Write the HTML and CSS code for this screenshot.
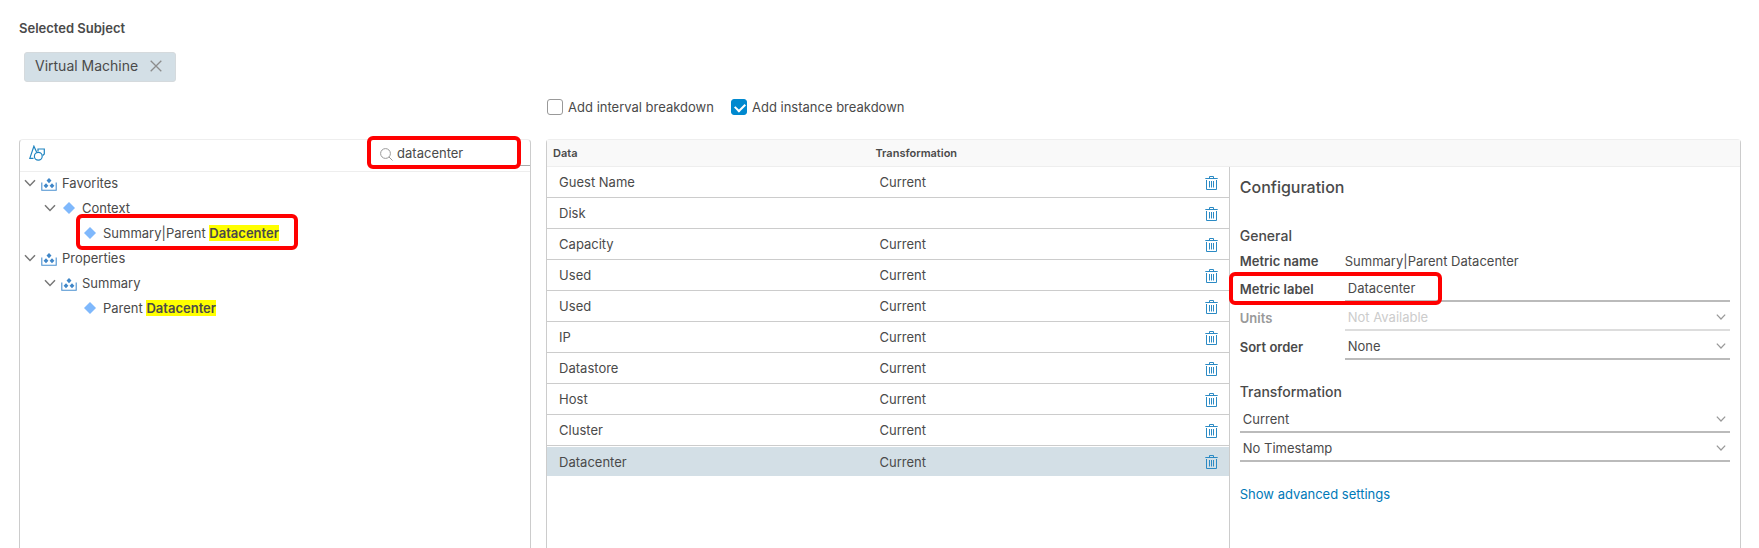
FILE: index.html
```html
<!DOCTYPE html>
<html lang="en">
<head>
<meta charset="utf-8">
<title>View data</title>
<link rel="stylesheet" href="styles.css">
</head>
<body>
<svg class="sprite" aria-hidden="true">
  <symbol id="caret" viewBox="0 0 12 8"><path d="M1 1.2 6 6.4 11 1.2" fill="none" stroke="currentColor" stroke-width="1.5"/></symbol>
  <symbol id="diamond" viewBox="0 0 12 12"><path d="M6 0 12 6 6 12 0 6Z" fill="#7fb8fc"/></symbol>
  <symbol id="group" viewBox="0 0 16 13">
    <path d="M.8 4.5V12.2H15.2V4.5" fill="none" stroke="#4a90d0" stroke-width="1.1"/>
    <path d="M8 0 10.5 2.6 8 5.2 5.500 2.600ZM5 5.300 7.400 7.800 5 10.300 2.600 7.800ZM11 5.300 13.400 7.800 11 10.300 8.600 7.800Z" fill="#3f86c8"/>
  </symbol>
  <symbol id="trash" viewBox="0 0 13 15">
    <path d="M.3 3.500H12.700M4.500 3V1.500H8.500V3M1.500 5V14.500H11.500V5M4.500 6V12.500M6.500 6V12.500M8.500 6V12.500" fill="none" stroke="#2b8ac4" stroke-width="1"/>
  </symbol>
</svg>

<header class="subject">
  <h1 class="subject-title">Selected Subject</h1>
  <div class="chip">Virtual Machine
    <button class="chip-close" type="button" aria-label="Remove Virtual Machine"><svg viewBox="0 0 12 12"><path d="M.7.700 11.300 11.300M11.300.700.700 11.300" fill="none" stroke="#8c8c8c" stroke-width="1.300"/></svg></button>
  </div>
</header>

<main class="workspace">
  <div class="options">
    <label class="option"><input class="check" type="checkbox">Add interval breakdown</label>
    <label class="option"><input class="check" type="checkbox" checked>Add instance breakdown</label>
  </div>

  <section class="panel tree-panel">
    <div class="tree-bar">
      <button class="shapes" type="button" aria-label="Object types"><svg viewBox="0 0 16 16"><path d="M4.500 13.400H.8L4.900 1.200 7.600 7M9 6.500V4H15.300V9L13.700 10.500" fill="none" stroke="#1f84c0" stroke-width="1.200"/><circle cx="9.300" cy="11.200" r="3.900" fill="none" stroke="#1f84c0" stroke-width="1.200"/></svg></button>
      <label class="search marked">
        <svg class="search-icon" viewBox="0 0 13 13"><circle cx="5.500" cy="5.500" r="4.900" fill="none" stroke="#999" stroke-width="1"/><path d="M9 9 12.500 12.500" stroke="#999" stroke-width="1"/></svg>
        <input class="search-input" type="text" value="datacenter" aria-label="Search">
        <span class="mark"></span>
      </label>
    </div>
    <ul class="tree">
      <li><div class="node"><svg class="caret"><use href="#caret"/></svg><svg class="group"><use href="#group"/></svg>Favorites</div>
        <ul class="branch">
          <li><div class="node"><svg class="caret"><use href="#caret"/></svg><svg class="diamond"><use href="#diamond"/></svg>Context</div>
            <ul class="branch">
              <li><div class="node leaf marked"><svg class="diamond"><use href="#diamond"/></svg><span>Summary|Parent <mark>Datacenter</mark></span><span class="mark"></span></div></li>
            </ul>
          </li>
        </ul>
      </li>
      <li><div class="node"><svg class="caret"><use href="#caret"/></svg><svg class="group"><use href="#group"/></svg>Properties</div>
        <ul class="branch">
          <li><div class="node"><svg class="caret"><use href="#caret"/></svg><svg class="group"><use href="#group"/></svg>Summary</div>
            <ul class="branch">
              <li><div class="node leaf"><svg class="diamond"><use href="#diamond"/></svg><span>Parent <mark>Datacenter</mark></span></div></li>
            </ul>
          </li>
        </ul>
      </li>
    </ul>
  </section>

  <section class="panel data-panel">
    <div class="table-wrap">
      <table class="data">
        <thead><tr><th class="col-data">Data</th><th>Transformation</th><th class="col-action"></th></tr></thead>
        <tbody>
          <tr><td>Guest Name</td><td>Current</td><td><button class="delete" type="button" aria-label="Delete Guest Name"><svg><use href="#trash"/></svg></button></td></tr>
          <tr><td>Disk</td><td></td><td><button class="delete" type="button" aria-label="Delete Disk"><svg><use href="#trash"/></svg></button></td></tr>
          <tr><td>Capacity</td><td>Current</td><td><button class="delete" type="button" aria-label="Delete Capacity"><svg><use href="#trash"/></svg></button></td></tr>
          <tr><td>Used</td><td>Current</td><td><button class="delete" type="button" aria-label="Delete Used"><svg><use href="#trash"/></svg></button></td></tr>
          <tr><td>Used</td><td>Current</td><td><button class="delete" type="button" aria-label="Delete Used"><svg><use href="#trash"/></svg></button></td></tr>
          <tr><td>IP</td><td>Current</td><td><button class="delete" type="button" aria-label="Delete IP"><svg><use href="#trash"/></svg></button></td></tr>
          <tr><td>Datastore</td><td>Current</td><td><button class="delete" type="button" aria-label="Delete Datastore"><svg><use href="#trash"/></svg></button></td></tr>
          <tr><td>Host</td><td>Current</td><td><button class="delete" type="button" aria-label="Delete Host"><svg><use href="#trash"/></svg></button></td></tr>
          <tr><td>Cluster</td><td>Current</td><td><button class="delete" type="button" aria-label="Delete Cluster"><svg><use href="#trash"/></svg></button></td></tr>
          <tr class="selected"><td>Datacenter</td><td>Current</td><td><button class="delete" type="button" aria-label="Delete Datacenter"><svg><use href="#trash"/></svg></button></td></tr>
        </tbody>
      </table>
    </div>
    <aside class="config">
      <div class="config-bar"></div>
      <form class="config-body">
        <h2 class="config-title">Configuration</h2>
        <h3 class="config-group">General</h3>
        <div class="row row-text"><span class="row-label">Metric name</span><span>Summary|Parent Datacenter</span></div>
        <div class="row marked"><label class="row-label" for="metric-label">Metric label</label><input class="field" id="metric-label" type="text" value="Datacenter"><span class="mark"></span></div>
        <div class="row row-disabled"><label class="row-label" for="units">Units</label><div class="select"><select class="field" id="units" disabled><option>Not Available</option></select><svg><use href="#caret"/></svg></div></div>
        <div class="row"><label class="row-label" for="sort">Sort order</label><div class="select"><select class="field" id="sort"><option>None</option></select><svg><use href="#caret"/></svg></div></div>
        <h3 class="config-group">Transformation</h3>
        <div class="select"><select class="field" aria-label="Transformation"><option>Current</option></select><svg><use href="#caret"/></svg></div>
        <div class="select"><select class="field" aria-label="Timestamp"><option>No Timestamp</option></select><svg><use href="#caret"/></svg></div>
        <a class="advanced" href="#">Show advanced settings</a>
      </form>
    </aside>
  </section>
</main>
</body>
</html>
```

FILE: styles.css
```css
* {
  box-sizing: border-box;
}

body {
  margin: 0;
  min-height: 100vh;
  display: flex;
  flex-direction: column;
  padding: 18px 18px 0 19px;
  background: #fff;
  color: #4a4a4a;
  font: 13px/20px Inter, "Open Sans", sans-serif;
}

h1, h2, h3, ul {
  margin: 0;
  padding: 0;
}

ul {
  list-style: none;
}

button {
  display: flex;
  padding: 0;
  border: 0;
  background: none;
}

svg {
  display: block;
  flex: none;
}

input, select {
  font: inherit;
  color: inherit;
}

.sprite {
  position: absolute;
  width: 0;
  height: 0;
}

.subject {
  display: flex;
  flex-direction: column;
  align-items: flex-start;
  gap: 14px;
}

.subject-title {
  font-size: 13px;
  line-height: 20px;
  font-weight: 600;
}

.chip {
  display: flex;
  align-items: center;
  gap: 12px;
  height: 30px;
  margin-left: 5px;
  padding: 0 13px 2px 10px;
  border: 1px solid #d5dadd;
  border-radius: 3px;
  background: #d3dfe6;
  font-size: 14px;
}

.chip-close svg {
  width: 12px;
  height: 12px;
}

.workspace {
  flex: 1;
  display: grid;
  grid-template: auto 1fr / 3fr 7fr;
  column-gap: 15px;
  margin-top: 15px;
}

.options {
  grid-column: 2;
  display: flex;
  gap: 16px;
  height: 42px;
}

.option {
  display: flex;
  align-items: flex-start;
  gap: 5px;
  height: 20px;
}

.check {
  appearance: none;
  width: 16px;
  height: 16px;
  margin: 2px 0 0 1px;
  border: 1px solid #999;
  border-radius: 3px;
}

.check:checked {
  border-color: #0089cf;
  background: #0089cf;
}

.check:checked::before {
  content: "";
  display: block;
  width: 8px;
  height: 5px;
  margin: 3px;
  border: solid #fff;
  border-width: 0 0 2px 2px;
  transform: rotate(-45deg);
}

.panel {
  border: 1px solid #ccc;
  border-top-color: #eee;
  border-bottom: 0;
  border-radius: 4px 4px 0 0;
}

.tree-bar {
  display: flex;
  justify-content: space-between;
  height: 32px;
  padding-left: 9px;
  border-bottom: 1px solid #eee;
}

.shapes {
  margin-top: 5px;
}

.shapes svg {
  width: 16px;
  height: 16px;
}

.marked {
  position: relative;
}

.mark {
  position: absolute;
  border: 4px solid #f00;
  border-radius: 6px;
  pointer-events: none;
}

.search {
  display: flex;
  align-items: center;
  gap: 4px;
  width: 150px;
  height: 26px;
  border-bottom: 1px solid #aaa;
}

.search-icon {
  width: 13px;
  height: 13px;
  margin-top: 4px;
}

.search-input {
  flex: 1;
  min-width: 0;
  padding: 0;
  border: 0;
  background: none;
}

.search .mark {
  inset: -4px 9px -4px -13px;
}

.node {
  display: flex;
  align-items: center;
  gap: 5px;
  height: 25px;
  padding: 0 0 3px 4px;
}

.branch {
  padding-left: 20px;
}

.leaf {
  width: fit-content;
  padding-left: 22px;
  padding-right: 19px;
}

.leaf .mark {
  inset: -8px 0 -3px 16px;
}

.tree mark {
  background: #ff0;
  color: inherit;
  font-weight: 600;
}

.caret {
  width: 12px;
  height: 8px;
  color: #777;
}

.group {
  width: 16px;
  height: 13px;
  margin-top: 3px;
}

.diamond {
  width: 12px;
  height: 12px;
  margin: 0 2px;
}

.data-panel {
  display: grid;
  grid-template-columns: 4fr 3fr;
}

.data {
  width: 100%;
  border-collapse: separate;
  border-spacing: 0;
  table-layout: fixed;
}

.data th {
  height: 27px;
  padding: 0 6px;
  border-bottom: 1px solid #eee;
  background: #f9f9f9;
  text-align: left;
  font-size: 11px;
  line-height: 16px;
  font-weight: 600;
}

.data td {
  height: 31px;
  padding: 0 12px;
  border-bottom: 1px solid #ccc;
}

.data th + th {
  padding-left: 8px;
}

.col-data {
  width: 47%;
}

.col-action {
  width: 36px;
}

.data .selected td {
  height: 30px;
  border-top: 1px solid #fff;
  border-bottom: 0;
  background: #d3dfe6;
}

.delete svg {
  width: 13px;
  height: 15px;
}

.config {
  display: flex;
  flex-direction: column;
}

.config-bar {
  height: 27px;
  border-bottom: 1px solid #eee;
  background: #f9f9f9;
}

.config-body {
  flex: 1;
  padding: 8px 10px 0;
  border-left: 1px solid #ccc;
}

.config-title {
  margin-bottom: 25px;
  font-size: 16px;
  line-height: 24px;
  font-weight: 500;
}

.config-group {
  font-size: 14px;
  line-height: 24px;
  font-weight: 500;
}

.row {
  display: grid;
  grid-template-columns: 105px 1fr;
  align-items: center;
  margin-bottom: 2px;
}

.row-text {
  height: 25px;
}

.row-label {
  font-weight: 600;
}

.row-disabled {
  color: #999;
}

.row .mark {
  inset: -3px 288px -3px -11px;
}

.field {
  display: block;
  appearance: none;
  width: 100%;
  height: 27px;
  margin: 0;
  padding: 1px 3px 0;
  border: 0;
  border-bottom: 2px solid #bbb;
  border-radius: 0;
  background: none;
}

.field:disabled {
  border-color: #ddd;
  color: #ccc;
  opacity: 1;
}

.select {
  position: relative;
  margin-bottom: 2px;
}

.row .select {
  margin-bottom: 0;
}

.select svg {
  position: absolute;
  right: 4px;
  top: 9px;
  width: 10px;
  height: 8px;
  color: #999;
  pointer-events: none;
}

.row + .config-group {
  margin: 20px 0 2px;
}

.advanced {
  display: inline-block;
  margin-top: 20px;
  color: #0079b8;
  text-decoration: none;
}
```
